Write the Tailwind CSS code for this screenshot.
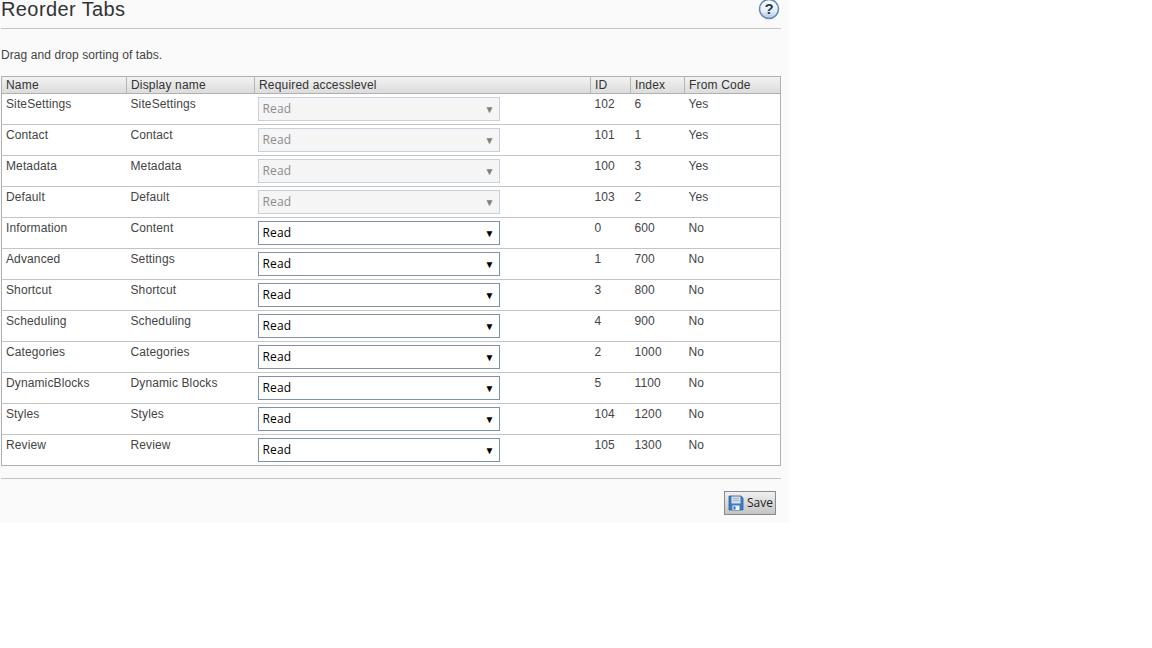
<!DOCTYPE html>
<html lang="en">
<head>
  <meta charset="UTF-8" />
  <title>Reorder Tabs</title>
  <script src="https://cdn.jsdelivr.net/npm/@tailwindcss/browser@4"></script>
</head>
<body class="bg-white font-['Liberation_Sans',Arial,sans-serif] text-[12px] text-[#444] h-[648px] overflow-hidden">
  <div class="w-[789px] h-[523px] bg-[#fafafa] pl-px pr-[8px]">
    <div class="h-[29px] border-b border-[#c4c4c4] flex justify-between items-start">
      <h1 class="text-[20px] leading-[18px] text-[#333] tracking-[0.4px]">Reorder Tabs</h1>
      <svg class="mr-px -mt-[2px]" width="22" height="22" viewBox="0 0 22 22">
        <defs>
          <linearGradient id="help" x1="0" y1="0" x2="0" y2="1">
            <stop offset="0" stop-color="#ffffff" />
            <stop offset="0.6" stop-color="#e6eff8" />
            <stop offset="1" stop-color="#a8c4e0" />
          </linearGradient>
        </defs>
        <circle cx="11" cy="11" r="9.5" fill="url(#help)" stroke="#5f87b2" stroke-width="1.5" />
        <text x="11" y="16" text-anchor="middle" font-family="Liberation Sans" font-weight="700" font-size="15" fill="#22395a">?</text>
      </svg>
    </div>
    <p class="mt-[19px] h-[28px] leading-[14px] tracking-[0.08px]">Drag and drop sorting of tabs.</p>
    <table class="w-[779px] table-fixed border-collapse border border-[#b0b0b0] bg-white tracking-[0.12px]">
      <colgroup>
        <col class="w-[125px]" /><col class="w-[128px]" /><col class="w-[336px]" /><col class="w-[40px]" /><col class="w-[54px]" /><col class="w-[96px]" />
      </colgroup>
      <thead>
        <tr class="h-[16px] bg-linear-to-b from-[#f2f2f2] to-[#dcdcdc] border-b border-[#b0b0b0] text-left text-[#333] tracking-[0.18px]">
          <th class="font-normal py-0 pl-[4px] leading-[16px] border-r border-[#b5b5b5]">Name</th>
          <th class="font-normal py-0 pl-[4px] leading-[16px] border-r border-[#b5b5b5]">Display name</th>
          <th class="font-normal py-0 pl-[4px] leading-[16px] border-r border-[#b5b5b5]">Required accesslevel</th>
          <th class="font-normal py-0 pl-[4px] leading-[16px] border-r border-[#b5b5b5]">ID</th>
          <th class="font-normal py-0 pl-[4px] leading-[16px] border-r border-[#b5b5b5]">Index</th>
          <th class="font-normal py-0 pl-[4px] leading-[16px]">From Code</th>
        </tr>
      </thead>
      <tbody>
        <tr class="h-[31px] border-b border-[#c4c4c4] align-top"><td class="pl-[4px] pt-[1px]">SiteSettings</td><td class="pl-[4px] pt-[1px]">SiteSettings</td><td class="pl-[3px] pt-[3px]"><div class="w-[242px] h-[24px] border border-[#c8d0dc] bg-[#f5f5f5] text-[#8c8c8c] flex justify-between items-center pl-[4px] pr-[4px] font-['Open_Sans',sans-serif] text-[12px]"><span>Read</span><span class="text-[10px] text-[#808080]">▼</span></div></td><td class="pl-[4px] pt-[1px]">102</td><td class="pl-[4px] pt-[1px]">6</td><td class="pl-[4px] pt-[1px]">Yes</td></tr>
        <tr class="h-[31px] border-b border-[#c4c4c4] align-top"><td class="pl-[4px] pt-[1px]">Contact</td><td class="pl-[4px] pt-[1px]">Contact</td><td class="pl-[3px] pt-[3px]"><div class="w-[242px] h-[24px] border border-[#c8d0dc] bg-[#f5f5f5] text-[#8c8c8c] flex justify-between items-center pl-[4px] pr-[4px] font-['Open_Sans',sans-serif] text-[12px]"><span>Read</span><span class="text-[10px] text-[#808080]">▼</span></div></td><td class="pl-[4px] pt-[1px]">101</td><td class="pl-[4px] pt-[1px]">1</td><td class="pl-[4px] pt-[1px]">Yes</td></tr>
        <tr class="h-[31px] border-b border-[#c4c4c4] align-top"><td class="pl-[4px] pt-[1px]">Metadata</td><td class="pl-[4px] pt-[1px]">Metadata</td><td class="pl-[3px] pt-[3px]"><div class="w-[242px] h-[24px] border border-[#c8d0dc] bg-[#f5f5f5] text-[#8c8c8c] flex justify-between items-center pl-[4px] pr-[4px] font-['Open_Sans',sans-serif] text-[12px]"><span>Read</span><span class="text-[10px] text-[#808080]">▼</span></div></td><td class="pl-[4px] pt-[1px]">100</td><td class="pl-[4px] pt-[1px]">3</td><td class="pl-[4px] pt-[1px]">Yes</td></tr>
        <tr class="h-[31px] border-b border-[#c4c4c4] align-top"><td class="pl-[4px] pt-[1px]">Default</td><td class="pl-[4px] pt-[1px]">Default</td><td class="pl-[3px] pt-[3px]"><div class="w-[242px] h-[24px] border border-[#c8d0dc] bg-[#f5f5f5] text-[#8c8c8c] flex justify-between items-center pl-[4px] pr-[4px] font-['Open_Sans',sans-serif] text-[12px]"><span>Read</span><span class="text-[10px] text-[#808080]">▼</span></div></td><td class="pl-[4px] pt-[1px]">103</td><td class="pl-[4px] pt-[1px]">2</td><td class="pl-[4px] pt-[1px]">Yes</td></tr>
        <tr class="h-[31px] border-b border-[#c4c4c4] align-top"><td class="pl-[4px] pt-[1px]">Information</td><td class="pl-[4px] pt-[1px]">Content</td><td class="pl-[3px] pt-[3px]"><div class="w-[242px] h-[24px] border border-[#7f93a8] bg-white text-black flex justify-between items-center pl-[4px] pr-[4px] font-['Open_Sans',sans-serif] text-[12px]"><span>Read</span><span class="text-[10px]">▼</span></div></td><td class="pl-[4px] pt-[1px]">0</td><td class="pl-[4px] pt-[1px]">600</td><td class="pl-[4px] pt-[1px]">No</td></tr>
        <tr class="h-[31px] border-b border-[#c4c4c4] align-top"><td class="pl-[4px] pt-[1px]">Advanced</td><td class="pl-[4px] pt-[1px]">Settings</td><td class="pl-[3px] pt-[3px]"><div class="w-[242px] h-[24px] border border-[#7f93a8] bg-white text-black flex justify-between items-center pl-[4px] pr-[4px] font-['Open_Sans',sans-serif] text-[12px]"><span>Read</span><span class="text-[10px]">▼</span></div></td><td class="pl-[4px] pt-[1px]">1</td><td class="pl-[4px] pt-[1px]">700</td><td class="pl-[4px] pt-[1px]">No</td></tr>
        <tr class="h-[31px] border-b border-[#c4c4c4] align-top"><td class="pl-[4px] pt-[1px]">Shortcut</td><td class="pl-[4px] pt-[1px]">Shortcut</td><td class="pl-[3px] pt-[3px]"><div class="w-[242px] h-[24px] border border-[#7f93a8] bg-white text-black flex justify-between items-center pl-[4px] pr-[4px] font-['Open_Sans',sans-serif] text-[12px]"><span>Read</span><span class="text-[10px]">▼</span></div></td><td class="pl-[4px] pt-[1px]">3</td><td class="pl-[4px] pt-[1px]">800</td><td class="pl-[4px] pt-[1px]">No</td></tr>
        <tr class="h-[31px] border-b border-[#c4c4c4] align-top"><td class="pl-[4px] pt-[1px]">Scheduling</td><td class="pl-[4px] pt-[1px]">Scheduling</td><td class="pl-[3px] pt-[3px]"><div class="w-[242px] h-[24px] border border-[#7f93a8] bg-white text-black flex justify-between items-center pl-[4px] pr-[4px] font-['Open_Sans',sans-serif] text-[12px]"><span>Read</span><span class="text-[10px]">▼</span></div></td><td class="pl-[4px] pt-[1px]">4</td><td class="pl-[4px] pt-[1px]">900</td><td class="pl-[4px] pt-[1px]">No</td></tr>
        <tr class="h-[31px] border-b border-[#c4c4c4] align-top"><td class="pl-[4px] pt-[1px]">Categories</td><td class="pl-[4px] pt-[1px]">Categories</td><td class="pl-[3px] pt-[3px]"><div class="w-[242px] h-[24px] border border-[#7f93a8] bg-white text-black flex justify-between items-center pl-[4px] pr-[4px] font-['Open_Sans',sans-serif] text-[12px]"><span>Read</span><span class="text-[10px]">▼</span></div></td><td class="pl-[4px] pt-[1px]">2</td><td class="pl-[4px] pt-[1px]">1000</td><td class="pl-[4px] pt-[1px]">No</td></tr>
        <tr class="h-[31px] border-b border-[#c4c4c4] align-top"><td class="pl-[4px] pt-[1px]">DynamicBlocks</td><td class="pl-[4px] pt-[1px]">Dynamic Blocks</td><td class="pl-[3px] pt-[3px]"><div class="w-[242px] h-[24px] border border-[#7f93a8] bg-white text-black flex justify-between items-center pl-[4px] pr-[4px] font-['Open_Sans',sans-serif] text-[12px]"><span>Read</span><span class="text-[10px]">▼</span></div></td><td class="pl-[4px] pt-[1px]">5</td><td class="pl-[4px] pt-[1px]">1100</td><td class="pl-[4px] pt-[1px]">No</td></tr>
        <tr class="h-[31px] border-b border-[#c4c4c4] align-top"><td class="pl-[4px] pt-[1px]">Styles</td><td class="pl-[4px] pt-[1px]">Styles</td><td class="pl-[3px] pt-[3px]"><div class="w-[242px] h-[24px] border border-[#7f93a8] bg-white text-black flex justify-between items-center pl-[4px] pr-[4px] font-['Open_Sans',sans-serif] text-[12px]"><span>Read</span><span class="text-[10px]">▼</span></div></td><td class="pl-[4px] pt-[1px]">104</td><td class="pl-[4px] pt-[1px]">1200</td><td class="pl-[4px] pt-[1px]">No</td></tr>
        <tr class="h-[31px] align-top"><td class="pl-[4px] pt-[1px]">Review</td><td class="pl-[4px] pt-[1px]">Review</td><td class="pl-[3px] pt-[3px]"><div class="w-[242px] h-[24px] border border-[#7f93a8] bg-white text-black flex justify-between items-center pl-[4px] pr-[4px] font-['Open_Sans',sans-serif] text-[12px]"><span>Read</span><span class="text-[10px]">▼</span></div></td><td class="pl-[4px] pt-[1px]">105</td><td class="pl-[4px] pt-[1px]">1300</td><td class="pl-[4px] pt-[1px]">No</td></tr>
      </tbody>
    </table>
    <div class="mt-[12px] pt-[12px] border-t border-[#c4c4c4] flex justify-end pr-[5px]">
      <button class="w-[52px] h-[24px] border border-[#8a8a8a] bg-linear-to-b from-[#f0f0f0] to-[#c4c4c4] flex items-center gap-[3px] pl-[3px] text-[#222] font-['Open_Sans',sans-serif] text-[12px]">
        <svg width="16" height="16" viewBox="0 0 16 16">
          <path d="M1 1h12l2 2v12H1z" fill="#3d7cc4" stroke="#2a5f9e" stroke-width="0.8" />
          <rect x="3.5" y="1.5" width="9" height="7" fill="#d8dfe8" />
          <path d="M5 3.5h6M5 5.5h6" stroke="#9fb2c8" stroke-width="1" />
          <rect x="4.5" y="10.5" width="7" height="4.5" fill="#eef1f5" />
          <rect x="5.5" y="11.5" width="2" height="3" fill="#2f6bb0" />
        </svg>
        <span>Save</span>
      </button>
    </div>
  </div>
</body>
</html>
